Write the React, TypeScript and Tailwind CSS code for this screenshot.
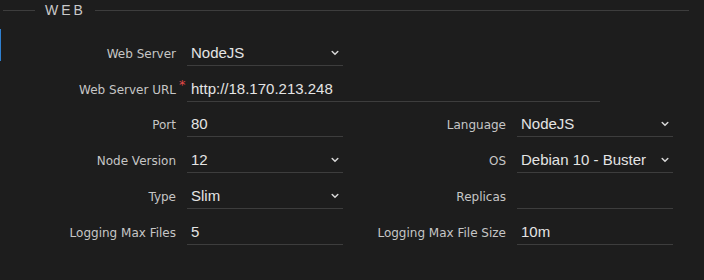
import React from 'react';

type Field = {
  label: string;
  value: string;
  select?: boolean;
};

const rows: [Field, Field | null][] = [
  [{ label: 'Port', value: '80' }, { label: 'Language', value: 'NodeJS', select: true }],
  [{ label: 'Node Version', value: '12', select: true }, { label: 'OS', value: 'Debian 10 - Buster', select: true }],
  [{ label: 'Type', value: 'Slim', select: true }, { label: 'Replicas', value: '' }],
  [{ label: 'Logging Max Files', value: '5' }, { label: 'Logging Max File Size', value: '10m' }],
];

const Chevron = () => (
  <svg width="8" height="6" viewBox="0 0 8 6" className="mb-[6px] shrink-0">
    <path d="M1.2 1.5 L4 4.2 L6.8 1.5" fill="none" stroke="#d8d8d8" strokeWidth="1.5" strokeLinecap="round" />
  </svg>
);

const Input = ({ value, select, width = 'w-[156px]' }: { value: string; select?: boolean; width?: string }) => (
  <div className={`${width} h-[29px] shrink-0 flex items-end justify-between border-b border-[#3d3d3d] pl-[4px] pr-[4px] pb-[3px]`}>
    <span className="text-[15px] leading-[18px] text-[#e4e4e4] font-['Liberation_Sans',Arial,sans-serif] whitespace-nowrap">
      {value}
    </span>
    {select && <Chevron />}
  </div>
);

const Label = ({ text, width }: { text: string; width: string }) => (
  <div className={`${width} shrink-0 text-right pb-[4px] text-[12px] leading-[16px] text-[#c6c6c6] whitespace-nowrap`}>
    {text}
  </div>
);

const App: React.FC = () => {
  return (
    <div className="relative w-[704px] h-[280px] bg-[#1d1d1d] font-['DejaVu_Sans',sans-serif] overflow-hidden">
      {/* active section marker */}
      <div className="absolute left-0 top-[29px] w-px h-[32px] bg-[#2f80d0]" />

      {/* Section header */}
      <div className="flex items-center h-[20px] pl-[3px] pr-[15px]">
        <div className="w-[32px] h-px bg-[#3d3d3d]" />
        <span className="ml-[10px] mr-[9px] text-[14px] leading-[20px] tracking-[3px] text-[#c9c9c9] font-['Liberation_Sans',Arial,sans-serif]">
          WEB
        </span>
        <div className="flex-1 h-px bg-[#3d3d3d]" />
      </div>

      {/* Form */}
      <div className="mt-[17px] flex flex-col gap-[7px]">
        <div className="flex items-end">
          <Label text="Web Server" width="w-[176px]" />
          <div className="w-[11px] shrink-0" />
          <Input value="NodeJS" select />
        </div>

        <div className="flex items-end">
          <Label text="Web Server URL" width="w-[176px]" />
          <div className="w-[11px] shrink-0 self-start pt-[5px] pl-[3px] text-[13px] leading-[13px] text-[#e04848]">*</div>
          <Input value="http://18.170.213.248" width="w-[413px]" />
        </div>

        {rows.map(([left, right], i) => (
          <div key={left.label} className={`flex items-end ${i === 0 ? '-mt-px' : ''}`}>
            <Label text={left.label} width="w-[176px]" />
            <div className="w-[11px] shrink-0" />
            <Input value={left.value} select={left.select} />
            {right && (
              <>
                <Label text={right.label} width="w-[163px]" />
                <div className="w-[11px] shrink-0" />
                <Input value={right.value} select={right.select} />
              </>
            )}
          </div>
        ))}
      </div>
    </div>
  );
};

export default App;
